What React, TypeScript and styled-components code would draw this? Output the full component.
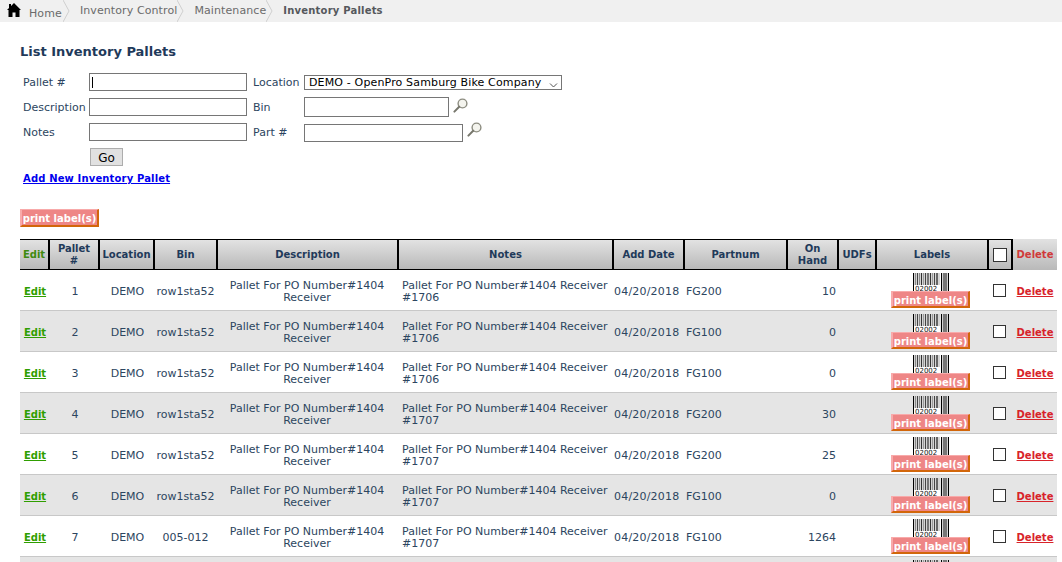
import React from 'react';
import styled, { createGlobalStyle } from 'styled-components';

const GlobalStyle = createGlobalStyle`
  html, body {
    margin: 0;
    padding: 0;
    height: 562px;
    overflow: hidden;
    background: #fff;
    font-family: "DejaVu Sans", Verdana, sans-serif;
    font-size: 11px;
    color: #1f3a5a;
  }
`;

const Crumbs = styled.div`
  display: flex;
  height: 22px;
  background: #f0f0f0;
  padding-left: 7px;
  color: #6b6b6b;
`;

const Crumb = styled.div<{ $low?: boolean; $bold?: boolean }>`
  display: flex;
  align-items: center;
  gap: 8px;
  height: 22px;
  padding: ${(p) => (p.$low ? '5px 8px 0 0' : '0 7px 2px 10px')};
  box-sizing: border-box;
  font-size: ${(p) => (p.$bold ? '10px' : '11px')};
  letter-spacing: ${(p) => (p.$bold ? '0.2px' : '0.1px')};
  white-space: nowrap;
  font-weight: ${(p) => (p.$bold ? 700 : 400)};
  color: ${(p) => (p.$bold ? '#55585c' : '#6b6b6b')};
  background-repeat: no-repeat;
  background-position: right center;
  background-size: 7px 22px;
  background-image: ${(p) =>
    p.$bold
      ? 'none'
      : `url("data:image/svg+xml,%3Csvg xmlns='http://www.w3.org/2000/svg' width='7' height='22'%3E%3Cpath d='M0 0l6 11-6 11' fill='none' stroke='%23cfcfcf'/%3E%3C/svg%3E")`};
`;

const HomeIcon = styled.svg`
  width: 14px;
  height: 14px;
  margin-top: -7px;
`;

const Main = styled.div`
  padding: 22px 5px 0 20px;
`;

const Title = styled.h1`
  margin: 0 0 13px;
  font-size: 13px;
  line-height: 16px;
  font-weight: 700;
  color: #1f3a5a;
`;

const FilterGrid = styled.div`
  display: grid;
  grid-template-columns: 66px 158px 57px 1fr;
  grid-auto-rows: 18px;
  row-gap: 7px;
  padding-left: 3px;
  width: 600px;
  align-items: center;
`;

const FieldLabel = styled.label<{ $right?: boolean }>`
  font-size: 11px;
  line-height: 18px;
  color: #2c4560;
  padding: 2px 0 0 ${(p) => (p.$right ? '6px' : '0')};
  white-space: nowrap;
`;

const TextInput = styled.input<{ $w?: number; $h?: number }>`
  box-sizing: border-box;
  display: block;
  width: ${(p) => p.$w ?? 158}px;
  height: ${(p) => p.$h ?? 18}px;
  padding: 0 2px;
  border: 1px solid #767676;
  background: #fff;
  outline: none;
  font: 11px "DejaVu Sans", sans-serif;
`;

const Caret = styled.span`
  position: absolute;
  left: 3px;
  top: 4px;
  width: 1px;
  height: 11px;
  background: #000;
`;

const CaretWrap = styled.div`
  position: relative;
  width: 158px;
`;

const SelectBox = styled.div`
  box-sizing: border-box;
  display: flex;
  align-items: center;
  justify-content: space-between;
  width: 258px;
  height: 15px;
  margin-top: 1px;
  padding: 0 3px 0 4px;
  border: 1px solid #767676;
  font-size: 11px;
  letter-spacing: 0.15px;
  color: #000;
  white-space: nowrap;
`;

const SelectArrow = styled.svg`
  width: 9px;
  height: 6px;
  margin-top: 4px;
`;

const LookupCell = styled.div<{ $drop?: number }>`
  display: flex;
  align-items: flex-start;
  gap: 4px;
  margin-top: ${(p) => p.$drop ?? 0}px;
`;

const LensIcon = styled.svg<{ $top: number }>`
  display: block;
  width: 15px;
  height: 15px;
  margin-top: ${(p) => p.$top}px;
`;

const GoRow = styled.div`
  padding: 7px 0 0 70px;
`;

const GoButton = styled.button`
  display: block;
  box-sizing: border-box;
  width: 33px;
  height: 18px;
  padding: 1px 0 0;
  border: 1px solid #adadad;
  background: #e1e1e1;
  color: #000;
  font: 12px "DejaVu Sans", sans-serif;
`;

const AddLink = styled.a`
  display: block;
  margin: 6px 0 0 3px;
  color: #0000ee;
  font-size: 10px;
  line-height: 14px;
  letter-spacing: 0.15px;
  font-weight: 700;
  text-decoration: underline;
`;

const PrintButton = styled.button<{ $tall?: boolean }>`
  display: block;
  box-sizing: border-box;
  width: 79px;
  height: ${(p) => (p.$tall ? 18 : 17)}px;
  padding: ${(p) => (p.$tall ? '1px' : '2px')} 0 0;
  margin: 0;
  border-style: solid;
  border-width: 1px 2px 2px 2px;
  border-color: #f8aaaa #d2660a #d2660a #f8aaaa;
  background: #ee8686;
  color: #fff;
  font: 700 10px/13px "DejaVu Sans", sans-serif;
  white-space: nowrap;
`;

const PrintTop = styled.div`
  margin: 23px 0 12px;
  width: 79px;
`;

const Table = styled.table`
  border-collapse: separate;
  border-spacing: 0;
  table-layout: fixed;
  width: 1037px;
  font-size: 11px;
`;

const Head = styled.th<{ $w: number; $plain?: boolean; $color?: string }>`
  width: ${(p) => p.$w}px;
  height: 31px;
  padding: 0;
  box-sizing: border-box;
  font-size: 10px;
  line-height: 12px;
  text-align: center;
  font-weight: 700;
  color: ${(p) => p.$color ?? '#1f3a5a'};
  background: linear-gradient(#e2e2e2, #b9b9b9);
  border-style: solid;
  border-color: #000;
  border-width: ${(p) => (p.$plain ? '0' : '1px 2px 1px 0')};
`;

const Cell = styled.td<{ $align?: string; $pad?: string; $wide?: boolean; $top?: boolean }>`
  height: 41px;
  padding: ${(p) => p.$pad ?? '4px 0 0'};
  box-sizing: border-box;
  border-bottom: 1px solid #c8c8c8;
  text-align: ${(p) => p.$align ?? 'center'};
  line-height: 12px;
  color: #2c4560;
  vertical-align: ${(p) => (p.$top ? 'top' : 'middle')};
  letter-spacing: ${(p) => (p.$wide ? '0.2px' : '0')};
`;

const Row = styled.tr<{ $shade: boolean }>`
  background: ${(p) => (p.$shade ? '#e5e5e5' : '#fff')};
`;

const RowLink = styled.a<{ $color: string }>`
  color: ${(p) => p.$color};
  font-size: 10px;
  font-weight: 700;
  text-decoration: underline;
`;

const CheckBox = styled.span<{ $big?: boolean }>`
  display: inline-block;
  box-sizing: border-box;
  width: ${(p) => (p.$big ? 14 : 13)}px;
  height: ${(p) => (p.$big ? 14 : 13)}px;
  border: 1px solid #333;
  background: #fff;
  vertical-align: middle;
`;

const LabelStack = styled.div`
  display: flex;
  flex-direction: column;
  align-items: center;
  padding: 3px 5px 0 0;
`;

const Barcode = styled.svg`
  display: block;
  width: 36px;
  height: 18px;
`;

const Lens = ({ top }: { top: number }) => (
  <LensIcon $top={top} viewBox="0 0 15 15">
    <circle cx="9.5" cy="5.5" r="4.4" fill="#f4f4ee" stroke="#8c8c80" strokeWidth="1.4" />
    <path d="M6.2 8.8 L1.4 13.6" stroke="#77776c" strokeWidth="2" strokeLinecap="round" />
  </LensIcon>
);

// x, width, colour of each bar in the label barcode
const bars: [number, number, string][] = [
  [0, 1, '#000'],
  [2, 1, '#888'],
  [4, 1, '#444'],
  [6, 1, '#888'],
  [8, 1, '#333'],
  [10, 1, '#999'],
  [12, 1, '#444'],
  [14, 2, '#777'],
  [17, 1, '#333'],
  [19, 1, '#999'],
  [21, 1, '#444'],
  [23, 2, '#666'],
  [28, 1, '#000'],
  [30, 4, '#777'],
  [35, 1, '#000'],
];

const BarcodeArt = () => (
  <Barcode viewBox="0 0 36 18">
    <rect x="1" y="0" width="26" height="18" fill="#d4d4d4" />
    <rect x="29" y="0" width="6" height="18" fill="#d4d4d4" />
    {bars.map(([x, w, c]) => (
      <rect key={x} x={x} y={0} width={w} height={18} fill={c} />
    ))}
    <rect x="1" y="12" width="26" height="6" fill="#fff" />
    <text x="2" y="17.5" fontSize="7" fontFamily="DejaVu Sans, sans-serif" fill="#111">
      02002
    </text>
  </Barcode>
);

type Pallet = {
  id: number;
  bin: string;
  receiver: string;
  part: string;
  onHand: number;
};

const pallets: Pallet[] = [
  { id: 1, bin: 'row1sta52', receiver: '#1706', part: 'FG200', onHand: 10 },
  { id: 2, bin: 'row1sta52', receiver: '#1706', part: 'FG100', onHand: 0 },
  { id: 3, bin: 'row1sta52', receiver: '#1706', part: 'FG100', onHand: 0 },
  { id: 4, bin: 'row1sta52', receiver: '#1707', part: 'FG200', onHand: 30 },
  { id: 5, bin: 'row1sta52', receiver: '#1707', part: 'FG200', onHand: 25 },
  { id: 6, bin: 'row1sta52', receiver: '#1707', part: 'FG100', onHand: 0 },
  { id: 7, bin: '005-012', receiver: '#1707', part: 'FG100', onHand: 1264 },
  { id: 8, bin: '005-012', receiver: '#1707', part: 'FG100', onHand: 0 },
];

const App = () => (
  <>
    <GlobalStyle />
    <Crumbs>
      <Crumb $low>
        <HomeIcon viewBox="0 0 14 14">
          <path d="M7 0 L14 7 H12.5 V14 H8.5 V9.5 H5.5 V14 H1.5 V7 H0 L2 5 V1 H4 V3 Z" fill="#000" />
        </HomeIcon>
        Home
      </Crumb>
      <Crumb>Inventory Control</Crumb>
      <Crumb>Maintenance</Crumb>
      <Crumb $bold>Inventory Pallets</Crumb>
    </Crumbs>
    <Main>
      <Title>List Inventory Pallets</Title>
      <FilterGrid>
        <FieldLabel>Pallet #</FieldLabel>
        <CaretWrap>
          <TextInput />
          <Caret />
        </CaretWrap>
        <FieldLabel $right>Location</FieldLabel>
        <SelectBox>
          DEMO - OpenPro Samburg Bike Company
          <SelectArrow viewBox="0 0 9 6">
            <path d="M1 1.5 L4.5 5 L8 1.5" fill="none" stroke="#555" />
          </SelectArrow>
        </SelectBox>
        <FieldLabel>Description</FieldLabel>
        <TextInput />
        <FieldLabel $right>Bin</FieldLabel>
        <LookupCell>
          <TextInput $w={145} $h={20} />
          <Lens top={1} />
        </LookupCell>
        <FieldLabel>Notes</FieldLabel>
        <TextInput />
        <FieldLabel $right>Part #</FieldLabel>
        <LookupCell $drop={2}>
          <TextInput $w={159} />
          <Lens top={-2} />
        </LookupCell>
      </FilterGrid>
      <GoRow>
        <GoButton>Go</GoButton>
      </GoRow>
      <AddLink href="#">Add New Inventory Pallet</AddLink>
      <PrintTop>
        <PrintButton $tall>print label(s)</PrintButton>
      </PrintTop>
      <Table>
        <thead>
          <tr>
            <Head $w={30} $color="#3f8a10">Edit</Head>
            <Head $w={50}>Pallet<br />#</Head>
            <Head $w={55}>Location</Head>
            <Head $w={63}>Bin</Head>
            <Head $w={181}>Description</Head>
            <Head $w={215}>Notes</Head>
            <Head $w={71}>Add Date</Head>
            <Head $w={103}>Partnum</Head>
            <Head $w={51}>On<br />Hand</Head>
            <Head $w={38}>UDFs</Head>
            <Head $w={112}>Labels</Head>
            <Head $w={24}><CheckBox $big /></Head>
            <Head $w={44} $plain $color="#d03a3a">Delete</Head>
          </tr>
        </thead>
        <tbody>
          {pallets.map((p, i) => (
            <Row key={p.id} $shade={i % 2 === 1}>
              <Cell><RowLink href="#" $color="#2f9e00">Edit</RowLink></Cell>
              <Cell>{p.id}</Cell>
              <Cell>DEMO</Cell>
              <Cell $pad="4px 2px 0 0">{p.bin}</Cell>
              <Cell $pad="4px 3px 0 0">Pallet For PO Number#1404<br />Receiver</Cell>
              <Cell $align="left" $pad="4px 0 0 3px">Pallet For PO Number#1404 Receiver<br />{p.receiver}</Cell>
              <Cell $align="left" $wide>04/20/2018</Cell>
              <Cell $align="left" $pad="4px 0 0 1px">{p.part}</Cell>
              <Cell $align="right" $pad="4px 3px 0 0">{p.onHand}</Cell>
              <Cell />
              <Cell $top $pad="0">
                <LabelStack>
                  <BarcodeArt />
                  <PrintButton>print label(s)</PrintButton>
                </LabelStack>
              </Cell>
              <Cell $align="left" $pad="0 0 0 4px"><CheckBox /></Cell>
              <Cell><RowLink href="#" $color="#d8232a">Delete</RowLink></Cell>
            </Row>
          ))}
        </tbody>
      </Table>
    </Main>
  </>
);

export default App;
